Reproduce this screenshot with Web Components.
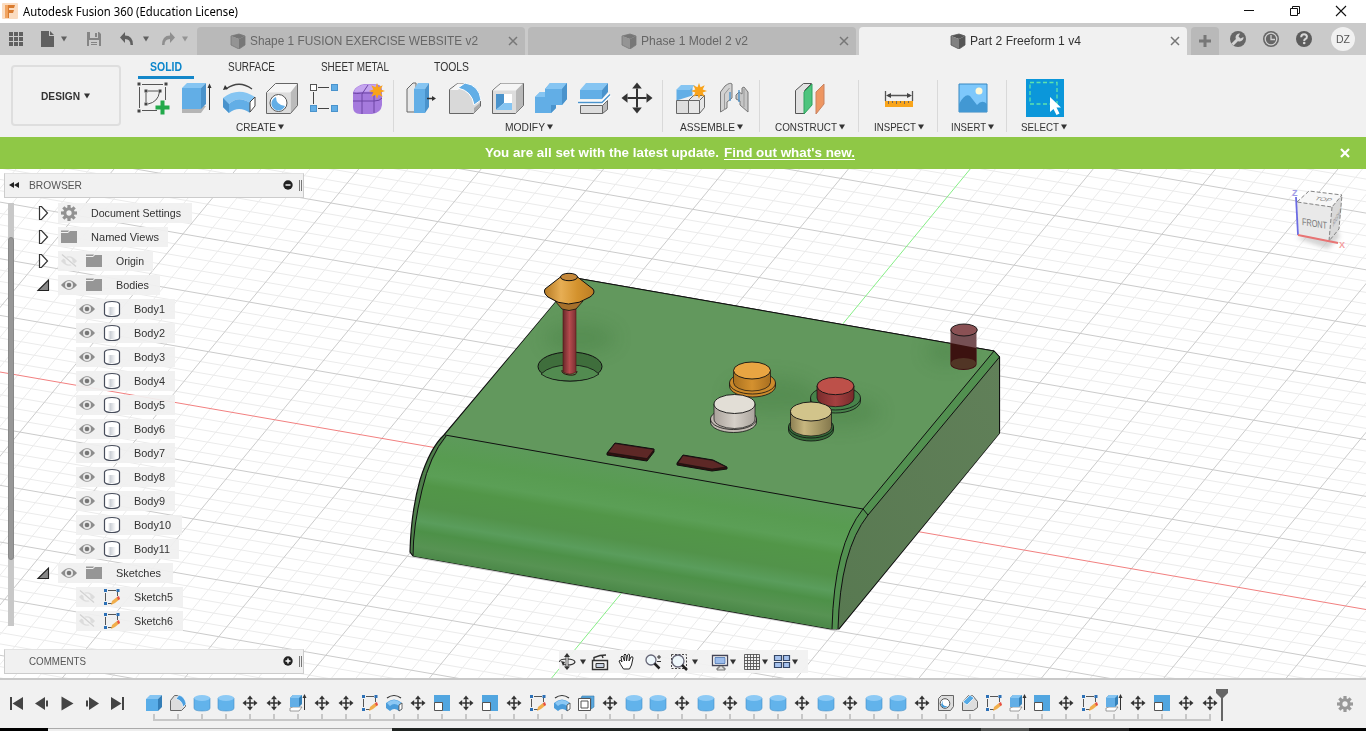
<!DOCTYPE html>
<html lang="en">
<head>
<meta charset="utf-8">
<title>Autodesk Fusion 360</title>
<style>
html,body{margin:0;height:100%;overflow:hidden}
body{font-family:"Liberation Sans",Arial,sans-serif;font-size:11px;color:#333}
</style>
</head>
<body>
<fusion-app></fusion-app>
<script>
const mount=(el,html)=>{el.attachShadow({mode:'open'}).innerHTML=html;return el.shadowRoot};

/* ---------- icon set ---------- */
const B='#62aee6',BL='#86c5f2',BD='#4a93cc',G='#d8d8d8',K='#555';
const sq=(x,y,c)=>`<rect x="${x-1.5}" y="${y-1.5}" width="3" height="3" fill="${c}"/>`;
const gearPath=(cx,cy,r)=>{let s='';for(let i=0;i<8;i++)s+=`<rect x="${cx-r*.2}" y="${cy-r}" width="${r*.4}" height="${r*.6}" transform="rotate(${i*45} ${cx} ${cy})"/>`;return s+`<circle cx="${cx}" cy="${cy}" r="${r*.52}" fill="none" stroke="currentColor" stroke-width="${r*.38}"/>`};
const star=(x,y,r)=>{let p=[];for(let i=0;i<16;i++){const a=i*Math.PI/8,q=i%2?r*.5:r;p.push((x+q*Math.sin(a)).toFixed(1)+','+(y-q*Math.cos(a)).toFixed(1))}return `<polygon points="${p.join(' ')}" fill="#f9a31a"/>`};
const moveIcon=(c,r,h,w)=>`<g fill="#333"><path d="M${c-r+h} ${c}H${c+r-h}M${c} ${c-r+h}V${c+r-h}" stroke="#333" stroke-width="${w}"/>${[0,90,180,270].map(a=>`<path d="M${c} ${c-r}l${h*.8} ${h}h${-h*1.6}z" transform="rotate(${a} ${c} ${c})"/>`).join('')}</g>`;
const ICONS={
 sketch:[36,`<path d="M7 4.500H28M4.500 7V28M7 30.500H22M30.500 7V20" fill="none" stroke="#555"/>${sq(4,4,'#444')}${sq(31,4,'#444')}${sq(4,31,'#444')}${sq(11,11,'#444')}${sq(25,11,'#444')}${sq(11,24,'#444')}<path d="M13 11H23M11 13V22M24.500 12Q23 22 13 24" fill="none" stroke="#555"/><path d="M25.500 20.500h4v5h5v4h-5v5h-4v-5h-5v-4h5z" fill="#22a94a"/>`],
 extrude:[36,`<path d="M4 29l5-3h19l-5 7H4z" fill="#b5b5b5"/><path d="M4 8l5-5h19l-5 5z" fill="${BL}"/><path d="M4 8h19v21H4z" fill="${B}"/><path d="M23 8l5-5v21l-5 5z" fill="${BD}"/><path d="M31.500 7V30" stroke="#333"/><path d="M31.500 3.500l2 4.500h-4z" fill="#333"/>`],
 revolve:[36,`<path d="M5 9Q18-.5 31 9" fill="none" stroke="#444" stroke-width="1.300"/><path d="M2 10l2-5 3 4z" fill="#333"/><path d="M2 18Q17 6 34 17l-5 6Q17 15 8 24z" fill="${BL}"/><path d="M8 24Q17 15 29 23v10Q18 25 8 33L2 27V18z" fill="${B}"/><path d="M2 18l6 6v9l-6-6z" fill="${BD}"/><path d="M29 22l5-5v9l-5 6z" fill="#fff" stroke="#444"/>`],
 hole:[36,`<path d="M2.500 12.500l9-9h22l-7 9z" fill="#f6f6f6"/><path d="M26.500 12.500l7-9v22l-7 8z" fill="#bbb"/><path d="M2.500 12.500h24v21h-24z" fill="#ddd"/><path d="M2.500 12.500l9-9h22v22l-7 8h-24z" fill="none" stroke="#666"/><circle cx="14.500" cy="23" r="8.500" fill="#fff" stroke="#555"/><path d="M12 17a7 7 0 1 0 9 9q-9-1-9-9z" fill="${B}"/>`],
 pattern:[36,`<path d="M11 7.500H22M6.500 12V24M11 28.500H22" stroke="#444"/><rect x="3.500" y="4.500" width="6" height="6" fill="#fff" stroke="#555"/><rect x="24.500" y="4.500" width="6" height="6" fill="${B}" stroke="${BD}"/><rect x="3.500" y="25.500" width="6" height="6" fill="${B}" stroke="${BD}"/><rect x="24.500" y="25.500" width="6" height="6" fill="${B}" stroke="${BD}"/>`],
 form:[36,`<path d="M3 14q0-4 4-7t8-3h9q8 0 8 6v15q-1 8-10 9H10q-7 0-7-7z" fill="#a57add"/><path d="M4 12q2-7 12-7.500h11l-3 7z" fill="#c5a5ef"/><path d="M3 21h21q6 0 8-3M12 34V14l6-9M3 13q3 1 9 0h10q6 0 9-3M24 33V14" stroke="#6d45a4" fill="none"/>${star(27,11,8)}`],
 presspull:[36,`<path d="M3 9l6-6h3v29H3z" fill="#e8e8e8" stroke="#666"/><path d="M10 9l4-6h11l-4 6z" fill="${BL}"/><path d="M10 9h11v24H10z" fill="${B}"/><path d="M21 9l4-6v24l-4 6z" fill="${BD}"/><path d="M23 18.500h6" stroke="#333" stroke-width="1.500"/><path d="M32 18.500l-4-2.500v5z" fill="#333"/>`],
 fillet:[36,`<path d="M2.500 33.500V9.500l8-6H18Q33 8 33.500 22v4l-7 7.500z" fill="#d9d9d9" stroke="#666"/><path d="M3 10l8-6.500h6L11 10z" fill="#f7f7f7"/><path d="M11 8l7-5Q32 5 34 20l-7 5Q25 11 11 8z" fill="${B}" stroke="#fff"/><path d="M27 28l6-5v3l-6 7z" fill="#aaa"/>`],
 shell:[36,`<path d="M2.500 10.500l8-7h23v22l-8 8h-23z" fill="#ddd" stroke="#666"/><path d="M3 10.500l8-7h22l-7 7z" fill="#f5f5f5"/><path d="M26 10.500l7-7v22l-7 7.500z" fill="#b9b9b9"/><path d="M6 14h16v16H6z" fill="#fff"/><path d="M6 14h8v9l-8 7z" fill="${BD}"/><path d="M6 30l8-7h8v7z" fill="${BL}"/>`],
 combine:[36,`<path d="M2 17l5-5h5V9l5-6h17v16l-5 6h-6v3l-5 5H2z" fill="${B}"/><path d="M2 17l5-5h5v5zM12 9l5-6h17l-5 6z" fill="${BL}"/><path d="M29 9l5-6v16l-5 6h-6v3l-5 5v-8h11z" fill="${BD}"/>`],
 split:[36,`<path d="M4 10l6-7h22l-6 7z" fill="${BL}"/><path d="M4 10h22v9H4z" fill="${B}"/><path d="M26 10l6-7v9l-6 7z" fill="${BD}"/><path d="M4.500 25.500h22v8h-22z" fill="#ddd" stroke="#666"/><path d="M26.500 25.500l5-5v9l-5 4z" fill="#bbb" stroke="#666"/><path d="M2 22.500h24l8-8" fill="none" stroke="#fff" stroke-width="4"/><path d="M2 22.500h24l8-8" fill="none" stroke="${BD}" stroke-width="1.300"/>`],
 move:[36,moveIcon(18,15.5,6,2)],
 component:[36,`<path d="M3.500 20.500v-10l5-5h11v10" fill="${B}"/><path d="M3 10l5-5h14l-5 5z" fill="${BL}"/><path d="M3.500 20.500h12v13h-12z" fill="#ddd" stroke="#666"/><path d="M15.500 20.500l5-5h11v12l-5 6h-11z" fill="#e7e7e7" stroke="#666"/><path d="M15.500 20.500h11v13M26.500 20.500l5-5" fill="none" stroke="#666"/>${star(26,11,8)}`],
 joint:[36,`<path d="M4.500 32V12L9 6q5-4 7-2v14l-5 4v6z" fill="#d2d2d2" stroke="#777"/><path d="M8.500 30V14l5-6" fill="none" stroke="#999"/><path d="M20 15l3-3 3 2V8l2-1 4 5V32l-8-7v-4l-4-2z" fill="#c6c6c6" stroke="#777"/><path d="M28 9v18" stroke="#999"/><path d="M14 21V12M23 22V10" stroke="${BD}" stroke-width="1.300"/>`],
 construct:[36,`<path d="M3.500 33.500v-23l8-7h8l-7 7v23z" fill="#e1e1e1" stroke="#555"/><path d="M12 12l8-8v21l-8 9z" fill="#4dc47d" stroke="#2fa35e"/><path d="M24 12l8-8v20l-8 10z" fill="#ee9661" stroke="#c98260"/>`],
 inspect:[36,`<path d="M4.500 11v10M31.500 11v10M7 15.500h22" stroke="#555" stroke-width="1.300"/><path d="M5 15.500l5-2.500v5zM31 15.500l-5-2.500v5z" fill="#444"/><path d="M4 21h28v6H4z" fill="#f9a51b"/><path d="M7.500 21v3M11.500 21v2M15.500 21v3M19.500 21v2M23.500 21v3M27.500 21v2" stroke="#765"/>`],
 insert:[36,`<path d="M4 4h28v28H4z" fill="#7ec8fb" stroke="#3687c1"/><circle cx="24" cy="11" r="3.500" fill="#fff9d8"/><path d="M4 24q6-11 11-8l7 9q5-6 10-1v8H4z" fill="#4298d3"/>`],
 select:[38,`<path fill="#0b97da" d="M0 0h38v38H0z"/><path d="M4 3.500H31V25H4z" fill="none" stroke="#5fe2ad" stroke-dasharray="4 2.500" stroke-width="1.300"/><path d="M24 18v15l3.500-3 3 6 3-1.500-3-6h4.500z" fill="#fff"/>`],
 sBox:[18,`<path d="M1 5l4-4h12l-4 4z" fill="${BL}"/><path d="M1 5h12v12H1z" fill="#59ade8"/><path d="M13 5l4-4v12l-4 4z" fill="#347eb7"/>`],
 sFillet:[18,`<path d="M1.500 16.500v-10l4-5h3q8 3 8 11l-4 4z" fill="#ddd" stroke="#666"/><path d="M7 5l3-4q6 2 7 9l-3 3q-1-7-7-8z" fill="#4a9fe0" stroke="#fff" stroke-width=".6"/>`],
 sCyl:[18,`<path d="M1 4v10q0 3 8 3t8-3V4z" fill="#62b3eb" stroke="#448fc6" stroke-width=".6"/><ellipse cx="9" cy="4" rx="8" ry="3" fill="#8dcaf5"/>`],
 sMove:[18,moveIcon(9,7.5,3.7,1.6)],
 sExtrude:[18,`<path d="M1 14l3-1h9l-3 4H1z" fill="#fff" stroke="#777" stroke-width=".7"/><path d="M1 4l3-3h9v9l-3 3z" fill="#3581b9"/><path d="M1 4l3-3h9l-3 3z" fill="${BL}"/><path d="M1 4h9v9H1z" fill="${B}"/><path d="M15.500 3v13" stroke="#333"/><path d="M15.500 0l2 4h-4z" fill="#333"/>`],
 sSketch:[18,`<path d="M5 2.500h8M2.500 5v8M5 15.500h4M14.500 4v4" stroke="#555" fill="none"/>${sq(2.5,2.5,'#2d71b7')}${sq(15,2.5,'#2d71b7')}${sq(2.5,15.5,'#2d71b7')}<path d="M8 17l1-4 5-4 3 2-5 4z" fill="#f1ae4b"/><path d="M14 9l2-1 1 3-2 1z" fill="#e74e45"/>`],
 sRevolve:[18,`<path d="M2 4q7-5 14 0" fill="none" stroke="#333" stroke-width="1.200"/><path d="M1 9q8-7 16 0v6l-3 2q-5-4-9 0l-4-3z" fill="#4b9ddb"/><path d="M2 9q7-6 14 0l-2 3q-5-4-9 0z" fill="#8cc8f4"/><path d="M14 11l3-2v6l-3 2z" fill="#fff" stroke="#444" stroke-width=".8"/>`],
 sScale:[18,`<path d="M1 1h16v16H9V9H1z" fill="#52a6e0"/><path d="M1.500 8.500h8v8h-8z" fill="#fff" stroke="#555"/>`],
 sShell:[18,`<path d="M5 2h12v11l-3 2V4H4z" fill="#5ba9df" stroke="#357aab" stroke-width=".6"/><path d="M1.500 4.500h12v12h-12z" fill="#fff" stroke="#555"/><path d="M4 7h7v7H4z" fill="none" stroke="#555"/>`],
 sHole:[18,`<path d="M1.500 4.500l3-3h12v11l-3 4h-12z" fill="#ddd" stroke="#666"/><circle cx="8" cy="9.500" r="4.800" fill="#fff" stroke="#555"/><path d="M6 6q-2 7 5 6-5 4-7-1z" fill="#459bd9"/>`],
 sChamfer:[18,`<path d="M1.500 16.500v-8l6-7h4l5 6v6l-4 3z" fill="#ddd" stroke="#666"/><path d="M2 8l7-7 4 3-7 7z" fill="#55aae6" stroke="#fff" stroke-width=".7"/>`],
 eye:[18,`<path d="M1 9q8-9.500 16 0q-8 9.500-16 0z" fill="#8d8d8d"/><circle cx="9" cy="9" r="4" fill="#e9e9e9"/><circle cx="9" cy="9" r="2.300" fill="#777"/>`],
 eyeOff:[18,`<path d="M1 9q8-9.500 16 0q-8 9.500-16 0z" fill="#dcdcdc"/><circle cx="9" cy="9" r="3.500" fill="#f2f2f2"/><path d="M2 3l14 12" stroke="#f2f2f2" stroke-width="3"/><path d="M2 2.500l14 12" stroke="#d2d2d2" stroke-width="1.300"/>`],
 folder:[18,`<path d="M1 2.500h8l-1 1.500H1zM1 5h7l2-2h7v12H1z" fill="#969696"/>`],
 gear:[18,`<g fill="currentColor">${gearPath(9,9,8)}</g>`],
 body:[18,`<defs><linearGradient id="b"><stop stop-color="#fff"/><stop offset=".3" stop-color="#ccd0d6"/><stop offset="1" stop-color="#fff"/></linearGradient></defs><path d="M1.500 4q1-2.500 7.500-2.500T16.500 4v10q-1 2.500-7.500 2.500T1.500 14z" fill="#fff" stroke="#484e5c" stroke-width="1.200"/><path d="M5 7h8v8H5z" fill="url(#b)"/>`],
 closed:[18,`<path d="M4.500 2.500h2l6 6.500-6 6.500h-2z" fill="#fff" stroke="#333" stroke-width="1.200"/>`],
 open:[18,`<path d="M3 14.500L13.500 4v10.500z" fill="#888" stroke="#222" stroke-width="1.100"/>`],
 first:[18,`<path d="M3 3v13" stroke="#444" stroke-width="2"/><path d="M15 3v13L4.500 9.500z" fill="#444"/>`],
 prev:[18,`<path d="M12 3v13L2 9.500z" fill="#444"/><path d="M14 6.500v6" stroke="#444" stroke-width="2"/>`],
 play:[18,`<path d="M3.500 2.500v14L15.500 9.500z" fill="#444"/>`],
 next:[18,`<path d="M6 3v13l10-6.500z" fill="#444"/><path d="M4 6.500v6" stroke="#444" stroke-width="2"/>`],
 last:[18,`<path d="M3 3v13l10.500-6.500z" fill="#444"/><path d="M15 3v13" stroke="#444" stroke-width="2"/>`],
 apps:[16,`<path d="M1 1h4v4H1zM6 1h4v4H6zM11 1h4v4h-4zM1 6h4v4H1zM6 6h4v4H6zM11 6h4v4h-4zM1 11h4v4H1zM6 11h4v4H6zM11 11h4v4h-4z" fill="#606060"/>`],
 file:[16,`<path d="M1 0h8v5h5v11H1z" fill="#606060"/><path d="M10 0l4 4h-4z" fill="#606060"/>`],
 save:[16,`<path d="M1 1h12l2 2v12H1z" fill="#858585"/><path d="M4 1h8v6H4zM3 9h10v6H3z" fill="#cbcbcb"/><path d="M9 2h2v4H9zM5 11h6v1H5zM5 13h6v1H5z" fill="#858585"/>`],
 undo:[16,`<path d="M6 1v3.500q8 0 8 9.500h-2.500q0-6-5.500-6V12L1 6.500z" fill="#606060"/>`],
 redo:[16,`<path d="M10 1v3.500q-8 0-8 9.500h2.500q0-6 5.500-6V12l5-5.500z" fill="#8f8f8f"/>`],
 cube:[16,`<path d="M1 3l8-2 6 2-6 3z" fill="#555"/><path d="M1 3l8 3v10l-8-4z" fill="#818181"/><path d="M9 6l6-3v9l-6 4z" fill="#555"/><path d="M1 3l8-2 6 2v9l-6 4-8-4z" fill="none" stroke="#555" stroke-width=".8"/>`],
 wrench:[18,`<circle cx="9" cy="9" r="8" fill="#666"/><path d="M3.500 14.500L9 9" stroke="#d4d4d4" stroke-width="3"/><path d="M14.500 7A4 4 0 1 1 11 3.500L9.500 6.500l2 2z" fill="#d4d4d4"/>`],
 clock:[18,`<circle cx="9" cy="9" r="8" fill="#666"/><circle cx="9" cy="9" r="5.800" fill="none" stroke="#d0d0d0" stroke-width="1.300"/><path d="M9 5v4.500h4" fill="none" stroke="#d0d0d0" stroke-width="1.300"/>`],
 help:[18,`<circle cx="9" cy="9" r="8" fill="#5c5c5c"/><path d="M6.200 7.200q0-3 2.900-3 2.800 0 2.800 2.500 0 1.700-1.700 2.500-1 .6-1 1.800" fill="none" stroke="#d8d8d8" stroke-width="2"/><circle cx="9.200" cy="13" r="1.300" fill="#d8d8d8"/>`],
 orbit:[18,`<path d="M1.500 9q0-3 7.500-3t8 3q-1 3-8 3l-4-.5" fill="none" stroke="#333" stroke-width="1.200"/><path d="M7 9l-4-1 2 5z" fill="#333"/><path d="M8 3v11h2V3" fill="#fff" stroke="#333" stroke-width=".8"/><path d="M9 0l3 4H6zM9 17l3-3.500H6z" fill="#333"/>`],
 look:[18,`<path d="M1.500 7.500h15v9h-15zM3 7V4.500l6-2 6-.5M11 2l1 3" fill="none" stroke="#333" stroke-width="1.400"/><path d="M5 10.500h8v4H5z" fill="#c9d3e3" stroke="#333"/>`],
 hand:[18,`<path d="M5.500 16Q2 11 1 8q1-2 3 1L3 4q1-2 2 0l1.500 4L6 2q1-2 2 0l.5 6 1-6q1.500-2 2 0L11 8l2-4q2-1 2 1l-1.500 7-2 4z" fill="#fff" stroke="#222"/>`],
 zoom:[18,`<circle cx="7" cy="7" r="5" fill="#eef7fb" stroke="#667" stroke-width="1.300"/><path d="M10.500 10.500l5 5" stroke="#222" stroke-width="2.500"/><path d="M13 4h4M15 2v4M13 8.500h4" stroke="#333"/>`],
 fit:[18,`<path d="M1.500 1.500h15v14h-15z" fill="none" stroke="#444" stroke-dasharray="2 1.500"/><circle cx="8" cy="8" r="6" fill="#eef7fb" stroke="#667" stroke-width="1.300"/><path d="M12 12l5 5" stroke="#222" stroke-width="2.500"/>`],
 display:[18,`<path d="M1.500 2.500h15v10h-15z" fill="#fff" stroke="#445" stroke-width="1.300"/><path d="M4 4.500h10v6H4z" fill="#9cbceb" stroke="#4a72ad" stroke-width=".8"/><path d="M8 13h4v2h2v2H6v-2h2z" fill="#ddd" stroke="#444" stroke-width=".7"/>`],
 grid:[18,`<path d="M1.500 1.500h15v15h-15zM4.500 1v16M7.500 1v16M10.500 1v16M13.500 1v16M1 4.500h16M1 7.500h16M1 10.500h16M1 13.500h16" fill="none" stroke="#555" stroke-width=".9"/>`],
 views:[18,`<path d="M1.500 2.500h7v5h-7zM10.500 2.500h6v5h-6zM1.500 9.500h7v5h-7zM10.500 9.500h6v5h-6z" fill="#a6c2ee" stroke="#344666" stroke-width="1.200"/>`],
 minus:[10,`<circle cx="5" cy="5" r="4.700" fill="#222"/><path d="M2.500 5h5" stroke="#fff" stroke-width="1.400"/>`],
 plus:[10,`<circle cx="5" cy="5" r="4.700" fill="#222"/><path d="M2.500 5h5M5 2.500v5" stroke="#fff" stroke-width="1.400"/>`],
 collapse:[10,`<path d="M0 5l5-3v6zM5 5l5-3v6z" fill="#222"/>`],
 x:[10,`<path d="M1 1l8 8M9 1L1 9" stroke="currentColor" stroke-width="1.500"/>`],
 xBold:[10,`<path d="M1 1l8 8M9 1L1 9" stroke="currentColor" stroke-width="2.200"/>`],
 down:[8,`<path d="M1 1.500h6L4 6.500z" fill="currentColor"/>`],
 add:[14,`<path d="M7 1v12M1 7h12" stroke="#777" stroke-width="3"/>`],
 wMin:[12,`<path d="M1 5.500h10" stroke="#111"/>`],
 wMax:[12,`<path d="M1.500 3.500h7v7h-7zM3.500 3V1.500h7v7H9" fill="none" stroke="#111"/>`],
 wClose:[12,`<path d="M1 1l10 10M11 1L1 11" stroke="#111" stroke-width="1.100"/>`],
 logo:[16,`<rect width="16" height="16" rx="1" fill="#fbdcc0"/><path d="M3 2h10l-1 3H7v2h5l-1 3H7v5H3z" fill="#d97b2f"/><path d="M3 2h3v13H3z" fill="#f1a35e"/>`]
};
class FusionIcon extends HTMLElement{
 connectedCallback(){
  if(this.shadowRoot)return;
  const [v,body]=ICONS[this.getAttribute('name')];const s=this.getAttribute('size')||v;
  mount(this,`<style>:host{display:block;flex:none;width:${s}px;height:${s}px}svg{display:block}</style><svg width="${s}" height="${s}" viewBox="0 0 ${v} ${v}">${body}</svg>`);
 }
}
/* Text condensed or widened to a fixed advance width */
class FitText extends HTMLElement{
 connectedCallback(){
  if(this.shadowRoot)return;
  const r=mount(this,`<style>:host{display:inline-block;flex:none;white-space:nowrap}span{display:inline-block;transform-origin:0 50%}:host([underline]) span{text-decoration:underline;text-underline-offset:2px}</style><span><slot></slot></span>`);
  const s=r.querySelector('span'),w=+this.getAttribute('w'),nat=s.getBoundingClientRect().width;
  if(w&&nat){s.style.transform='scaleX('+(w/nat).toFixed(4)+')';this.style.width=w+'px'}
 }
}
class TitleBar extends HTMLElement{connectedCallback(){mount(this,`<style>
:host{display:flex;align-items:center;height:23px;background:#fff;padding:0 19px 2px 2px;box-sizing:border-box;font:12px "Noto Sans","Open Sans",sans-serif;color:#000}
fit-text{margin:2px 0 0 5px}.w{display:flex;align-items:center;margin-left:auto;gap:34px}</style>
<fusion-icon name="logo"></fusion-icon><fit-text w="215">Autodesk Fusion 360 (Education License)</fit-text>
<div class="w"><fusion-icon name="wMin"></fusion-icon><fusion-icon name="wMax"></fusion-icon><fusion-icon name="wClose"></fusion-icon></div>`)}}
class DocTab extends HTMLElement{connectedCallback(){const a=this.hasAttribute('active');mount(this,`<style>
:host{display:flex;box-sizing:border-box;height:28px;align-items:center;justify-content:center;border-radius:4px 4px 0 0;background:${a?'#f1f1f1':'#b9b9b9'};color:${a?'#333':'#666'};font-size:12.500px;position:relative;gap:4px;padding-right:15px}
fusion-icon{opacity:${a?1:.65}}.x{position:absolute;right:7px;top:9px;opacity:1;color:#777}</style>
<fusion-icon name="cube"></fusion-icon><slot></slot><fusion-icon class="x" name="x"></fusion-icon>`)}}
class TabBar extends HTMLElement{connectedCallback(){mount(this,`<style>
:host{display:flex;height:32px;background:#cacaca;box-sizing:border-box;align-items:flex-end}
.q{display:flex;width:197px;height:32px;align-items:center;box-sizing:border-box;padding-left:8px;color:#606060}
.q *{margin-right:4px}.q .g{margin-right:16px}
doc-tab{width:328px;margin-right:3px}.add{width:28px;height:28px;background:#b9b9b9;border-radius:4px 4px 0 0;display:grid;place-items:center;margin-left:1px}
.r{display:flex;height:32px;align-items:center;gap:15px;margin-left:10px}.av{width:24px;height:24px;border-radius:50%;background:#f1f1f1;display:grid;place-items:center;font-size:11px;color:#555;margin-left:3px}</style>
<div class="q"><fusion-icon class="g" name="apps"></fusion-icon><fusion-icon name="file"></fusion-icon><fusion-icon name="down" style="margin-right:18px"></fusion-icon><fusion-icon name="save" style="margin-right:17px"></fusion-icon><fusion-icon name="undo"></fusion-icon><fusion-icon name="down" style="margin:0 10px 0 3px"></fusion-icon><fusion-icon name="redo" style="margin-right:5px"></fusion-icon><fusion-icon name="down" style="opacity:.5"></fusion-icon></div>
<doc-tab><fit-text w="228">Shape 1 FUSION EXERCISE WEBSITE v2</fit-text></doc-tab>
<doc-tab><fit-text w="107">Phase 1 Model 2 v2</fit-text></doc-tab>
<doc-tab active><fit-text w="111">Part 2 Freeform 1 v4</fit-text></doc-tab>
<div class="add"><fusion-icon name="add"></fusion-icon></div>
<div class="r"><fusion-icon name="wrench"></fusion-icon><fusion-icon name="clock"></fusion-icon><fusion-icon name="help"></fusion-icon><div class="av"><fit-text w="14">DZ</fit-text></div></div>`)}}
class ToolGroup extends HTMLElement{connectedCallback(){
 const icons=this.getAttribute('icons').split(' ');mount(this,`<style>
:host{display:flex;flex:none;flex-direction:column;align-items:center;box-sizing:border-box;height:57px;border-right:1px solid transparent;background:linear-gradient(#d9d9d9,#d9d9d9) right 1px/1px 52px no-repeat;position:relative}
:host([last]){background:none}
.i{display:flex;height:38px;align-items:center}.i div{width:43px;display:flex;justify-content:center}
.l{display:flex;align-items:center;gap:1px;height:18px;margin-top:1px;font-size:11.500px;color:#333}</style>
<div class="i">${icons.map(n=>`<div><fusion-icon name="${n}"></fusion-icon></div>`).join('')}</div><div class="l"><fit-text w="${this.getAttribute('w')}">${this.getAttribute('label')}</fit-text><fusion-icon name="down"></fusion-icon></div>`)}}
class ToolRibbon extends HTMLElement{connectedCallback(){mount(this,`<style>
:host{display:flex;height:82px;background:#f1f1f1}
.d{width:110px;height:61px;box-sizing:border-box;border:2px solid #dedede;border-radius:4px;margin:10px 0 0 11px;display:flex;align-items:center;justify-content:center;gap:3px;font-weight:bold;font-size:11px}
.c{margin-left:5px}.t{display:flex;height:24px;padding-left:12px;font-size:12px}.t div{display:flex;justify-content:center;align-items:center;height:24px;box-sizing:border-box}
.t .s{width:56px;border-bottom:3px solid #1487c9;color:#0c86cb;font-weight:bold;padding-top:3px}.g{display:flex}</style>
<div class="d"><fit-text w="39">DESIGN</fit-text><fusion-icon name="down"></fusion-icon></div>
<div class="c"><div class="t"><div class="s"><fit-text w="32">SOLID</fit-text></div><div style="width:115px"><fit-text w="47">SURFACE</fit-text></div><div style="width:92px"><fit-text w="68">SHEET METAL</fit-text></div><div style="width:101px"><fit-text w="35">TOOLS</fit-text></div></div>
<div class="g"><tool-group style="width:269px" icons="sketch extrude revolve hole pattern form" label="CREATE" w="40"></tool-group>
<tool-group style="width:269px" icons="presspull fillet shell combine split move" label="MODIFY" w="40"></tool-group>
<tool-group style="width:97px" icons="component joint" label="ASSEMBLE" w="55"></tool-group>
<tool-group style="width:99px" icons="construct" label="CONSTRUCT" w="62"></tool-group>
<tool-group style="width:79px" icons="inspect" label="INSPECT" w="42"></tool-group>
<tool-group style="width:69px" icons="insert" label="INSERT" w="35"></tool-group>
<tool-group style="width:74px" last icons="select" label="SELECT" w="38"></tool-group></div></div>`)}}
class UpdateBanner extends HTMLElement{connectedCallback(){mount(this,`<style>
:host{display:grid;grid-template-columns:1fr auto 1fr;align-items:center;height:32px;background:#8fc846;color:#fff;font:bold 13px "Liberation Sans",sans-serif;box-sizing:border-box;padding:0 16px 1px 0}
.m{grid-column:2;display:flex;gap:5px;margin-right:10px}.x{justify-self:end}</style>
<div class="m"><fit-text w="234">You are all set with the latest update.</fit-text><fit-text underline w="131">Find out what's new.</fit-text></div><fusion-icon class="x" name="xBold"></fusion-icon>`)}}
class PaletteBar extends HTMLElement{connectedCallback(){mount(this,`<style>
:host{display:flex;width:300px;height:25px;box-sizing:border-box;background:#f1f1f1;border:1px solid #ccc;border-top-color:#e2e2e2;align-items:center;padding:0 1px 1px 4px;color:#555;font-size:11.500px}
.c{width:20px}.s{flex:1}.h{width:1px;height:11px;border:solid #777;border-width:0 1px;margin-left:6px}</style>
<div class="c">${this.hasAttribute('open')?'<fusion-icon name="collapse"></fusion-icon>':''}</div><div class="s"><slot></slot></div><fusion-icon name="${this.hasAttribute('open')?'minus':'plus'}"></fusion-icon><div class="h"></div>`)}}
class TreeRow extends HTMLElement{connectedCallback(){
 const a=n=>this.getAttribute(n),l=+a('level');mount(this,`<style>
:host{display:flex;height:20px;align-items:center}.a{width:${l==2?41:23}px}.b{display:flex;align-items:center;height:20px;background:rgba(240,240,240,.93);box-sizing:border-box;padding-left:2px;width:${a('bw')}px}
.b *{margin-right:7px}.b fit-text{margin:0 0 0 6px}fusion-icon{color:#929292}</style>
<div class="a">${a('arrow')?`<fusion-icon name="${a('arrow')}"></fusion-icon>`:''}</div><div class="b">${a('icons').split(' ').map(n=>`<fusion-icon name="${n}"></fusion-icon>`).join('')}<fit-text w="${a('w')}">${a('label')}</fit-text></div>`)}}
class BrowserTree extends HTMLElement{connectedCallback(){
 const R=[[1,'closed','gear','Document Settings',90,134],[1,'closed','folder','Named Views',68,110],[1,'closed','eyeOff folder','Origin',28,95],[1,'open','eye folder','Bodies',33,102]];
 for(let i=1;i<12;i++)R.push([2,'','eye body','Body'+i,i<10?31:i<11?37:36,i<10?99:i<11?106:103]);
 R.push([1,'open','eye folder','Sketches',45,115],[2,'','eyeOff sSketch','Sketch5',39,107],[2,'','eyeOff sSketch','Sketch6',39,107]);
 mount(this,`<style>:host{display:flex;height:423px;padding-left:4px;font-size:11.500px;color:#333}.s{width:6px;height:423px;background:#c8c8c8;box-sizing:border-box;padding-top:34px;margin-right:22px}.s i{display:block;height:323px;border-radius:3px;background:#979797;border:1px solid #888;box-sizing:border-box}.r{display:flex;flex-direction:column;gap:4px;margin-left:-1px}</style><div class="s"><i></i></div><div class="r">${R.map(r=>`<tree-row level="${r[0]}" arrow="${r[1]}" icons="${r[2]}" label="${r[3]}" w="${r[4]}" bw="${r[5]}"></tree-row>`).join('')}</div>`)}}
class NavBar extends HTMLElement{connectedCallback(){
 const it=[['orbit',1],['look'],['hand'],['zoom'],['fit',1],['display',1],['grid',1],['views',1]];
 const pad=[-1,4,9,8,8,12,6,4];
 mount(this,`<style>:host{display:flex;align-items:center;height:23px;width:249px;background:rgba(241,241,241,.95);box-sizing:border-box;color:#333}fusion-icon{flex:none}</style>${it.map((n,i)=>`<fusion-icon name="${n[0]}" size="18" style="margin-left:${pad[i]}px"></fusion-icon>${n[1]?`<fusion-icon name="down" style="margin-left:${i<2?3:i==4?3:0}px"></fusion-icon>`:''}`).join('')}`)}}
class ViewCube extends HTMLElement{connectedCallback(){mount(this,`<style>:host{display:block;width:66px;height:72px}svg{display:block;font-family:"Liberation Sans",sans-serif}</style>
<svg width="66" height="72" viewBox="0 0 66 72"><defs><filter id="f"><feGaussianBlur stdDeviation="2"/></filter></defs><path d="M12 54l32 11 12-12-4-10z" fill="#aaa" opacity=".5" filter="url(#f)"/>
<path d="M13 18l12-11 33 4-10 12z" fill="#f7f7f7"/><path d="M13 18l35 5-3 34-30-7z" fill="#e9e9e9"/><path d="M48 23l10-12-3 34-10 12z" fill="#d9d9d9"/>
<path d="M13 18l12-11 33 4-10 12zM48 23l-3 34 10-12 3-34" fill="none" stroke="#777" stroke-width=".9" stroke-dasharray="4 2"/>
<path d="M12 13l2 38" stroke="#6b6be2" stroke-width="1.800"/><path d="M14 51l40 8" stroke="#e87474" stroke-width="1.800"/>
<text x="8" y="12" font-size="9" font-weight="bold" fill="#a09be6">Z</text><text x="55" y="64" font-size="9" font-weight="bold" fill="#f3a0a0">X</text>
<text transform="matrix(1 .16 0 1 18 41)" font-size="10" fill="#777" textLength="25" lengthAdjust="spacingAndGlyphs">FRONT</text><text transform="matrix(1 .12 -.5 .6 30 16)" font-size="8" fill="#888">TOP</text><text transform="matrix(.3 -.5 0 1 49 43)" font-size="9" fill="#888">RIGHT</text></svg>`)}}
class ModelScene extends HTMLElement{connectedCallback(){
 let m='',M='';
 for(let i=-60;i<70;i++){const y=372+i*11.33;const s=`M0 ${y.toFixed(1)}L1366 ${(y+.174*1366).toFixed(1)}`;if(i%5)m+=s;else if(i)M+=s}
 for(let i=-45;i<60;i++){const x=970+i*24.48;const s=`M${(x+.823*2).toFixed(1)} 168L${(x-.823*512).toFixed(1)} 682`;if(i%5)m+=s;else if(i)M+=s}
 const btn=(cx,ty,rx,ry,h,bx,by,brx,bry,bh,top,side,base)=>`
 <path d="M${bx-brx} ${by}v${bh}a${brx} ${bry} 0 0 0 ${2*brx} 0v${-bh}z" fill="${base}" stroke="#111" stroke-width=".8"/><ellipse cx="${bx}" cy="${by}" rx="${brx}" ry="${bry}" fill="${base}" stroke="#111" stroke-width=".8"/>
 <path d="M${cx-rx} ${ty}v${h}a${rx} ${ry} 0 0 0 ${2*rx} 0v${-h}z" fill="url(#${side})" stroke="#111" stroke-width=".7"/><ellipse cx="${cx}" cy="${ty}" rx="${rx}" ry="${ry}" fill="${top}" stroke="#111" stroke-width=".9"/>`;
 const lg=(id,...s)=>`<linearGradient id="${id}">${s.map((c,i)=>`<stop offset="${i/(s.length-1)}" stop-color="${c}"/>`).join('')}</linearGradient>`;
 mount(this,`<style>:host{display:block;width:1366px;height:509px}svg{display:block}</style>
<svg width="1366" height="509" viewBox="0 169 1366 509"><defs>
<linearGradient id="front" gradientUnits="userSpaceOnUse" x1="660" y1="470" x2="639" y2="594"><stop stop-color="#5d9a5b"/><stop offset=".2" stop-color="#589c51"/><stop offset=".35" stop-color="#5b9f56"/><stop offset=".43" stop-color="#529648"/><stop offset=".6" stop-color="#52934a"/><stop offset=".72" stop-color="#5a9d5c"/><stop offset=".8" stop-color="#4d9148"/><stop offset=".92" stop-color="#579353"/><stop offset="1" stop-color="#4c8949"/></linearGradient>
<linearGradient id="side" x1="0" y1="1" x2="1" y2="0"><stop stop-color="#587951"/><stop offset="1" stop-color="#618059"/></linearGradient>
${lg('or','#aa711f','#d4912f','#a96f20')}${lg('wh','#aaa29b','#d6d0c9','#aaa49d')}${lg('rd','#792c2c','#a44040','#792b2b')}${lg('tn','#8d8053','#c7b67f','#a69865','#84784d')}${lg('shaft','#66292a','#b64b4e','#7a3032')}${lg('knob','#b67a24','#e7ae54','#d3922d','#bb7d24')}
<filter id="sh" x="-50%" y="-50%" width="200%" height="200%"><feGaussianBlur stdDeviation="9"/></filter><clipPath id="top"><path d="M570 277L994 351L863 509L445 435L555 303z"/></clipPath></defs>
<rect y="169" width="1366" height="509" fill="#fff"/>
<path d="${m}" stroke="#ebebeb" fill="none"/><path d="${M}" stroke="#cbcbcb" fill="none"/>
<path d="M0 372L1366 609.500" stroke="#f28080"/><path d="M971 168L550 680" stroke="#86ee86"/>
<path d="M570 277L994 351L999.500 357V433L839 629H831L413 556L410 552Q411 512 420 480Q430 448 444 435L555 303z" fill="#4e7e4a" stroke="#111" stroke-width="1.200"/>
<path d="M570 277L994 351L863 509L445 435L555 303z" fill="#62985d"/>
<path d="M445 435L863 509Q837 545 832 629L413 556Q413 527 422 490Q430 458 447 436z" fill="url(#front)"/>
<path d="M863 509L994 351L999.500 357L868 515Q840 550 838 629H832Q834 545 863 509z" fill="#529050"/>
<path d="M868 515L999.500 357V433L838 629Q840 550 868 515z" fill="url(#side)"/>
<g clip-path="url(#top)"><g fill="#41793e" opacity=".32" filter="url(#sh)"><ellipse cx="580" cy="338" rx="36" ry="15"/><ellipse cx="772" cy="395" rx="45" ry="18"/><ellipse cx="840" cy="412" rx="40" ry="15"/><ellipse cx="946" cy="352" rx="20" ry="12"/></g></g>
<path d="M445 435L863 509L994 351M863 509L868 515L999.500 357M863 509Q834 545 832 629M868 515Q840 550 838 629M446 436Q430 455 422 490Q413 527 413 556M570 277L994 351L999.500 357V433" fill="none" stroke="#111"/>
<ellipse cx="570" cy="366.500" rx="32" ry="14.500" fill="#3f6e3c" stroke="#111"/><path d="M541 374Q550 365 570 365T599 374Q590 381 570 381T541 374z" fill="#528b50" stroke="#111" stroke-width=".8"/>
<path d="M563 309h13v63q-6 4-13 0z" fill="url(#shaft)" stroke="#511" stroke-width=".6"/><path d="M562 370q-1 4 7 5t8-4" fill="none" stroke="#311"/>
<path d="M555 301l7 8q7 3 14 0l7-8z" fill="#a5702b" stroke="#111" stroke-width=".8"/><path d="M560.500 277L545 289q-2 4 3 8q20 14 42 0q6-4 3-8L577.500 277z" fill="url(#knob)" stroke="#111"/><ellipse cx="569" cy="277" rx="8.500" ry="3.700" fill="#c5883a" stroke="#111"/>
${btn(752,370.5,18.5,8.5,12,752.5,383,23,11,3,'#e9a542','or','#cc8a2b')}
${btn(835.5,386,18.5,8.7,12,835.5,398,25,12,3,'#bd5049','rd','#47834a')}
${btn(734.5,404,20.5,9.5,15,733.5,419,23,10.5,3,'#e2ded6','wh','#c2bab2')}
${btn(811,411.5,20.5,9.5,15,811,427,22.5,11,3,'#d2c48b','tn','#356b39')}
<path d="M615 443l39 6v3l-7 9-40-6v-2z" fill="#30100e" stroke="#111"/><path d="M615 443.500l39 6-7 9-39-6z" fill="#5d2826" stroke="#111" stroke-width=".6"/>
<path d="M683 455l30 5 14 7v2l-15 2-35-6v-2z" fill="#30100e" stroke="#111"/><path d="M683 455.500l30 5 13 6.500-14 2-34-6z" fill="#5d2826" stroke="#111" stroke-width=".6"/>
<path d="M950.500 330v34a13 6 0 0 0 26 0V330z" fill="#765054"/><path d="M950.500 343l26 5v16a13 6 0 0 1-26 0z" fill="#3c1210"/><ellipse cx="963.500" cy="363.500" rx="12.500" ry="5.500" fill="#513525"/><ellipse cx="964" cy="330" rx="13.300" ry="6" fill="#8a5154" stroke="#111" stroke-width=".9"/>
</svg>`)}}
class DesignCanvas extends HTMLElement{connectedCallback(){mount(this,`<style>
:host{display:block;position:relative;height:509px;background:#fff;overflow:hidden}
.p{position:absolute;left:4px;top:4px}.c{position:absolute;left:4px;bottom:4px}.n{position:absolute;left:559px;top:481px}.v{position:absolute;left:1284px;top:15px}</style>
<model-scene></model-scene><div class="p"><palette-bar open><fit-text w="53">BROWSER</fit-text></palette-bar><browser-tree style="margin-top:5px"></browser-tree></div>
<palette-bar class="c"><fit-text w="57">COMMENTS</fit-text></palette-bar><nav-bar class="n"></nav-bar><view-cube class="v"></view-cube>`)}}
class TimelinePanel extends HTMLElement{connectedCallback(){
 const k={b:'sBox',f:'sFillet',c:'sCyl',m:'sMove',e:'sExtrude',s:'sSketch',r:'sRevolve',q:'sScale',l:'sShell',h:'sHole',a:'sChamfer'};
 mount(this,`<style>:host{display:flex;height:48px;background:#f1f1f1;border-top:2px solid #c9c9c9;box-sizing:content-box}
.p{display:flex;padding:14px 0 0 8px;gap:7px;width:134px;box-sizing:border-box}.f{display:flex;margin-left:8px}.s{width:24px;height:41px;display:flex;flex-direction:column;align-items:center;padding-top:14px;box-sizing:border-box}
.s::after{content:"";width:24px;height:7px;margin-top:2px;box-sizing:border-box;border-bottom:2px solid #c7c7c7;background:linear-gradient(#c7c7c7,#c7c7c7) center/2px 7px no-repeat}
.s:first-child::after{width:13px;margin-left:11px;background-position:left}.s:last-child::after{width:13px;margin-right:11px;background-position:right}
.h{width:12px;height:32px;margin:9px 0 0 -6px}.g{margin:15px 12px 0 auto;color:#999}</style>
<div class="p">${['first','prev','play','next','last'].map(n=>`<fusion-icon name="${n}"></fusion-icon>`).join('')}</div>
<div class="f">${[...'bfccmmemmsrmqmqmsrlmccmcmccmcmccmhaseqmsemqmm'].map(c=>`<div class="s"><fusion-icon name="${k[c]}"></fusion-icon></div>`).join('')}</div>
<svg class="h" viewBox="0 0 12 32"><path d="M0 0h12v4L7 9v23H5V9L0 4z" fill="#666"/></svg><fusion-icon class="g" name="gear"></fusion-icon>`)}}
class TaskStrip extends HTMLElement{connectedCallback(){mount(this,`<style>:host{display:flex;height:3px;background:#000}i{display:block}</style><i style="width:48px"></i><i style="width:344px;background:#eee;border-top:1px solid #aaa;box-sizing:border-box"></i><i style="width:589px;background:#202422"></i><i style="width:48px;background:#505250"></i><i style="width:100px;background:#222"></i>`)}}
class FusionApp extends HTMLElement{connectedCallback(){mount(this,`<style>:host{display:flex;flex-direction:column;width:1366px;height:731px;overflow:hidden;background:#f1f1f1}title-bar,tab-bar,tool-ribbon,update-banner,design-canvas,timeline-panel,task-strip{flex:none}</style>
<title-bar></title-bar><tab-bar></tab-bar><tool-ribbon></tool-ribbon><update-banner></update-banner><design-canvas></design-canvas><timeline-panel></timeline-panel><task-strip></task-strip>`)}}
[['fusion-app',FusionApp],['title-bar',TitleBar],['tab-bar',TabBar],['doc-tab',DocTab],['tool-ribbon',ToolRibbon],['tool-group',ToolGroup],['update-banner',UpdateBanner],['design-canvas',DesignCanvas],['model-scene',ModelScene],['palette-bar',PaletteBar],['browser-tree',BrowserTree],['tree-row',TreeRow],['nav-bar',NavBar],['view-cube',ViewCube],['timeline-panel',TimelinePanel],['task-strip',TaskStrip],['fusion-icon',FusionIcon],['fit-text',FitText]].forEach(([n,c])=>customElements.define(n,c));
</script>
</body>
</html>
